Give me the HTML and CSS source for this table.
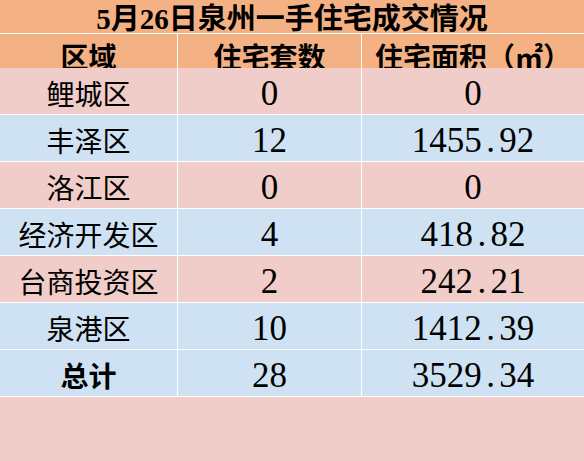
FILE: index.html
```html
<!DOCTYPE html>
<html lang="zh-CN">
<head>
<meta charset="utf-8">
<title>5月26日泉州一手住宅成交情况</title>
<link rel="stylesheet" href="styles.css">
</head>
<body>
<div class="sheet">
  <div class="title">5月26日泉州一手住宅成交情况</div>
  <div class="table">
    <div class="row head">
      <div class="cell">区域</div>
      <div class="cell">住宅套数</div>
      <div class="cell">住宅面积（㎡）</div>
    </div>
    <div class="row pink">
      <div class="cell">鲤城区</div>
      <div class="cell num">0</div>
      <div class="cell num">0</div>
    </div>
    <div class="row blue">
      <div class="cell">丰泽区</div>
      <div class="cell num">12</div>
      <div class="cell num">1455<span class="dot">.</span>92</div>
    </div>
    <div class="row pink">
      <div class="cell">洛江区</div>
      <div class="cell num">0</div>
      <div class="cell num">0</div>
    </div>
    <div class="row blue">
      <div class="cell">经济开发区</div>
      <div class="cell num">4</div>
      <div class="cell num">418<span class="dot">.</span>82</div>
    </div>
    <div class="row pink">
      <div class="cell">台商投资区</div>
      <div class="cell num">2</div>
      <div class="cell num">242<span class="dot">.</span>21</div>
    </div>
    <div class="row blue">
      <div class="cell">泉港区</div>
      <div class="cell num">10</div>
      <div class="cell num">1412<span class="dot">.</span>39</div>
    </div>
    <div class="row blue">
      <div class="cell bold">总计</div>
      <div class="cell num">28</div>
      <div class="cell num">3529<span class="dot">.</span>34</div>
    </div>
  </div>
  <div class="filler"></div>
</div>
</body>
</html>
```

FILE: styles.css
```css
html, body {
  margin: 0;
  padding: 0;
}

body {
  width: 584px;
  height: 461px;
  overflow: hidden;
  background: #f0cdc8;
  font-family: "Noto Sans CJK SC", sans-serif;
  color: #000;
}

.sheet {
  display: flex;
  flex-direction: column;
  height: 461px;
  background: #ffffff;
  gap: 1px;
}

.title {
  height: 33px;
  background: #f4b183;
  font-family: "Liberation Serif", "Noto Sans CJK SC", serif;
  font-weight: bold;
  font-size: 29px;
  line-height: 33px;
  padding-top: 3px;
  box-sizing: border-box;
  text-align: center;
  white-space: nowrap;
}

.table {
  display: flex;
  flex-direction: column;
  gap: 1px;
  background: #ffffff;
}

.row {
  display: grid;
  grid-template-columns: 177px 183px 1fr;
  column-gap: 1px;
  height: 46px;
}

.cell {
  display: flex;
  align-items: center;
  justify-content: center;
  font-size: 28px;
  padding-top: 4px;
  box-sizing: border-box;
  white-space: nowrap;
}

.head {
  height: 33px;
}

.head .cell {
  background: #f4b183;
  font-weight: bold;
  padding-top: 2px;
}

.pink .cell {
  background: #f0cdc8;
}

.blue .cell {
  background: #cfe2f3;
}

.bold {
  font-weight: bold;
}

.num {
  font-family: "Liberation Serif", serif;
  font-size: 35px;
  padding-top: 5px;
}

.dot {
  display: inline-block;
  width: 0.5em;
  text-align: center;
}

.filler {
  flex: 1;
  background: #f0cdc8;
}
```
